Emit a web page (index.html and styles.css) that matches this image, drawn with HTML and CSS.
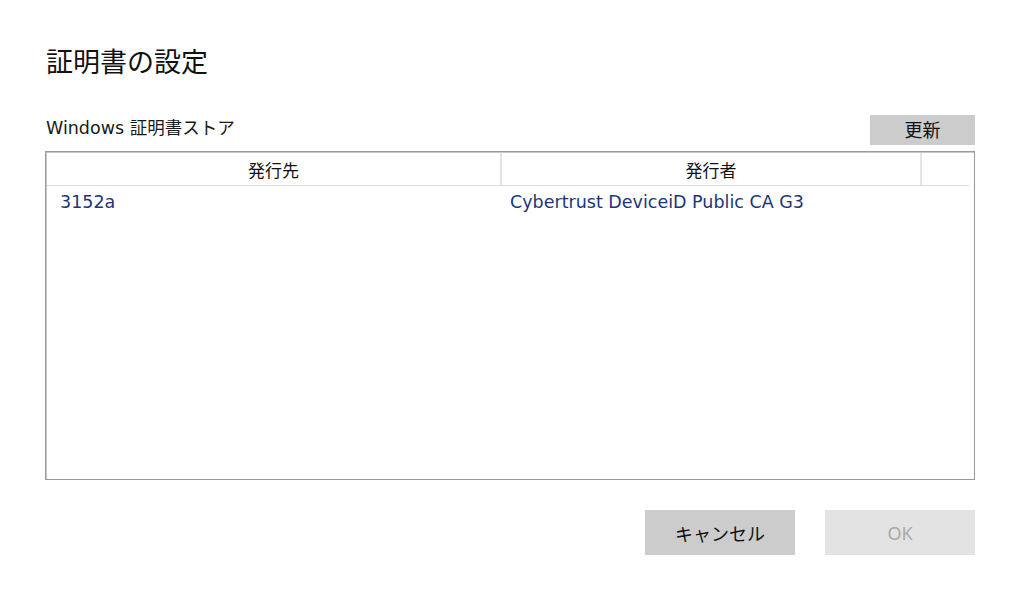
FILE: index.html
```html
<!DOCTYPE html>
<html lang="ja">
<head>
    <meta charset="UTF-8">
    <title>証明書の設定</title>
    <link rel="stylesheet" href="styles.css">
</head>
<body>
    <div class="dialog">
        <h1 class="title">証明書の設定</h1>

        <div class="store-bar">
            <span class="store-label">Windows 証明書ストア</span>
            <button class="btn btn-refresh">更新</button>
        </div>

        <!-- certificate list -->
        <div class="cert-list">
            <div class="cert-head">
                <div class="col col-subject">発行先</div>
                <div class="col col-issuer">発行者</div>
                <div class="col col-rest"></div>
            </div>
            <div class="cert-row">
                <div class="col col-subject">3152a</div>
                <div class="col col-issuer">Cybertrust DeviceiD Public CA G3</div>
            </div>
        </div>

        <div class="actions">
            <button class="btn btn-cancel">キャンセル</button>
            <button class="btn btn-ok" disabled>OK</button>
        </div>
    </div>
</body>
</html>
```

FILE: styles.css
```css
* {
    margin: 0;
    padding: 0;
    box-sizing: border-box;
}

body {
    background: #fff;
    font-family: "DejaVu Sans", "Noto Sans CJK JP", sans-serif;
    color: #1a1a1a;
}

.dialog {
    width: 1020px;
    height: 600px;
    padding: 44px 45px 0 45px;
}

.title {
    font-size: 27px;
    font-weight: 400;
    line-height: 38px;
    padding-left: 1px;
    color: #111;
}

.store-bar {
    display: flex;
    justify-content: space-between;
    align-items: flex-end;
    margin-top: 33px;
    margin-bottom: 6px;
}

.store-label {
    font-size: 17.5px;
    line-height: 24px;
    padding-left: 1px;
    padding-bottom: 5px;
}

.btn {
    border: none;
    outline: none;
    font-family: "Noto Sans", "Noto Sans CJK JP", sans-serif;
    font-size: 18px;
    color: #111;
    cursor: pointer;
}

.btn-refresh {
    width: 105px;
    height: 30px;
    background: #cccccc;
    line-height: 30px;
}

/* list box */
.cert-list {
    height: 329px;
    border: 1px solid #9a9a9a;
    box-shadow: inset 1px 1px 0 #c8c8c8;
    padding: 1px 5px 0 1px;
}

.cert-head {
    display: flex;
    height: 33px;
    border-bottom: 1px solid #dcdcdc;
    font-size: 17px;
    font-family: "Noto Sans CJK JP", sans-serif;
}

.cert-head .col {
    display: flex;
    align-items: center;
    justify-content: center;
    border-right: 2px solid #e4e4e4;
    color: #111;
}

.col-subject {
    width: 455px;
}

.col-issuer {
    width: 420px;
}

.cert-head .col-rest {
    flex: 1;
    border-right: none;
}

.cert-row {
    display: flex;
    height: 32px;
    align-items: center;
    font-size: 17.5px;
    color: #1b3579;
}

.cert-row .col-subject {
    padding-left: 13px;
}

.cert-row .col-issuer {
    padding-left: 8px;
}

.actions {
    display: flex;
    justify-content: flex-end;
    gap: 30px;
    margin-top: 30px;
}

.btn-cancel,
.btn-ok {
    width: 150px;
    height: 45px;
}

.btn-cancel {
    background: #cccccc;
}

.btn-ok {
    background: #e3e3e3;
    color: #a8a8a8;
    cursor: default;
}
```
